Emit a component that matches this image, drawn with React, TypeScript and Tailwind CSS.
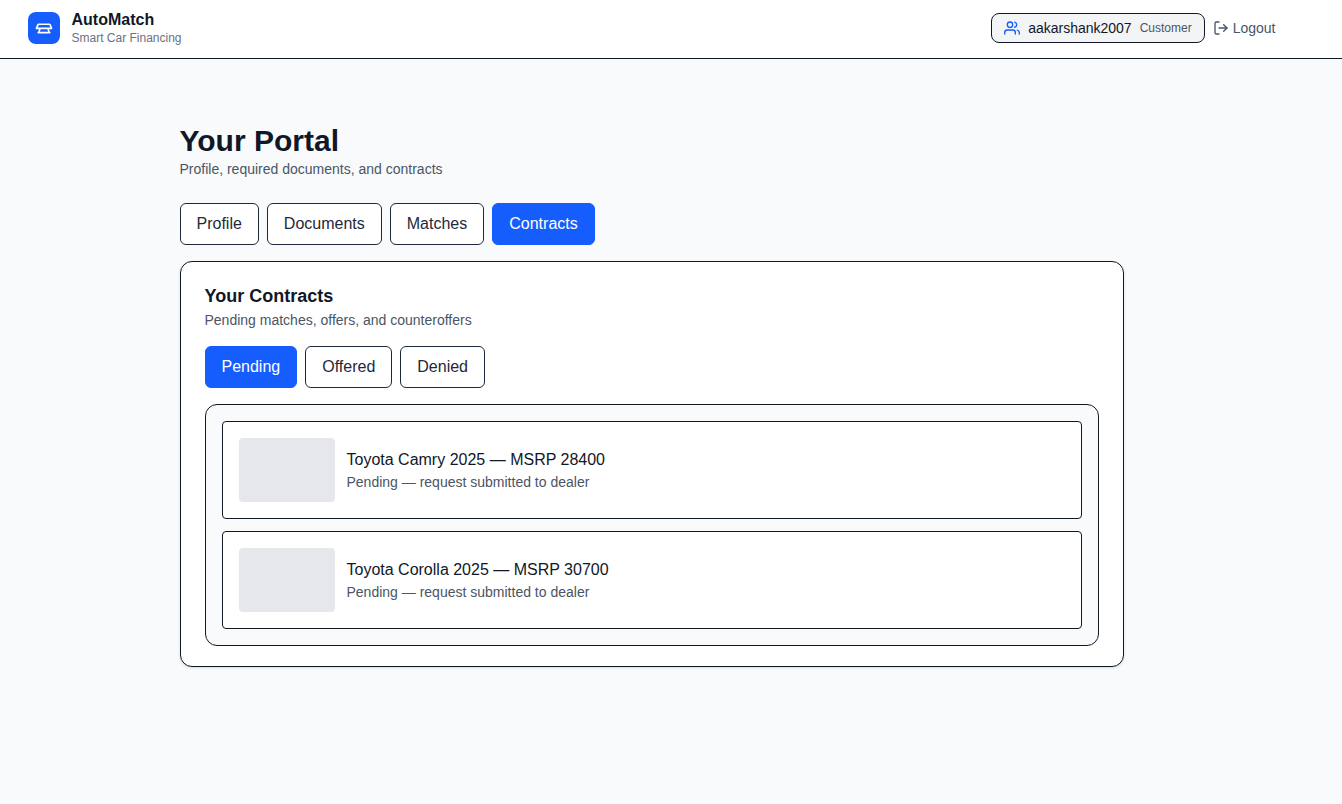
import { useState } from 'react';
import { FiLogOut, FiUsers } from 'react-icons/fi';

type PortalTab = 'Profile' | 'Documents' | 'Matches' | 'Contracts';
type ContractStatus = 'Pending' | 'Offered' | 'Denied';

interface Contract {
  id: number;
  title: string;
  status: ContractStatus;
  note: string;
}

const PORTAL_TABS: PortalTab[] = ['Profile', 'Documents', 'Matches', 'Contracts'];
const CONTRACT_TABS: ContractStatus[] = ['Pending', 'Offered', 'Denied'];

const CONTRACTS: Contract[] = [
  {
    id: 1,
    title: 'Toyota Camry 2025 — MSRP 28400',
    status: 'Pending',
    note: 'request submitted to dealer',
  },
  {
    id: 2,
    title: 'Toyota Corolla 2025 — MSRP 30700',
    status: 'Pending',
    note: 'request submitted to dealer',
  },
];

interface TabBarProps<T extends string> {
  label: string;
  tabs: T[];
  active: T;
  onSelect: (tab: T) => void;
}

function TabBar<T extends string>({ label, tabs, active, onSelect }: TabBarProps<T>) {
  return (
    <nav aria-label={label} className="flex flex-wrap gap-2">
      {tabs.map((tab) => (
        <button
          key={tab}
          type="button"
          aria-pressed={tab === active}
          onClick={() => onSelect(tab)}
          className={
            tab === active
              ? 'rounded-md border border-blue-600 bg-blue-600 px-4 py-2 text-white'
              : 'rounded-md border border-gray-800 bg-white px-4 py-2 text-gray-800'
          }
        >
          {tab}
        </button>
      ))}
    </nav>
  );
}

function CarLogo() {
  return (
    <div className="flex size-8 items-center justify-center rounded-lg bg-blue-600">
      <svg
        className="size-5 text-white"
        fill="none"
        viewBox="0 0 24 24"
        stroke="currentColor"
        strokeWidth={2}
        strokeLinecap="round"
        strokeLinejoin="round"
        aria-hidden="true"
      >
        {/* Roof and hood */}
        <path d="M3 12.5l1.5-4A1.5 1.5 0 0 1 6 7.5h12a1.5 1.5 0 0 1 1.5 1l1.5 4H3z" />
        {/* Grille and bumper */}
        <path d="M7 13l-1 4M17 13l1 4M5 17.5h14" />
      </svg>
    </div>
  );
}

function Header() {
  return (
    <header className="border-b border-gray-900 bg-white pr-[39px]">
      <div className="mx-auto flex max-w-7xl items-center justify-between px-4 pt-[10px] pb-3">
        <div className="flex items-center gap-3">
          <CarLogo />
          <div>
            <div className="text-base leading-5 font-bold">AutoMatch</div>
            <div className="text-xs text-gray-500">Smart Car Financing</div>
          </div>
        </div>
        <div className="flex items-center gap-2 text-sm">
          <div className="flex items-center gap-2 rounded-lg border border-gray-900 bg-gray-100 px-3 py-1">
            <FiUsers className="size-4 text-blue-600" aria-hidden="true" />
            <span>aakarshank2007</span>
            <span className="text-xs text-gray-600">Customer</span>
          </div>
          <button type="button" className="flex items-center gap-1 text-gray-600">
            <FiLogOut className="size-4" aria-hidden="true" />
            Logout
          </button>
        </div>
      </div>
    </header>
  );
}

function ContractCard({ contract }: { contract: Contract }) {
  return (
    <li className="flex items-center gap-3 rounded border border-gray-900 bg-white p-4">
      <div className="h-16 w-24 shrink-0 rounded bg-gray-200" />
      <div>
        <div>{contract.title}</div>
        <div className="text-sm text-gray-600">
          {contract.status} — {contract.note}
        </div>
      </div>
    </li>
  );
}

export default function App() {
  const [tab, setTab] = useState<PortalTab>('Contracts');
  const [status, setStatus] = useState<ContractStatus>('Pending');
  const visible = CONTRACTS.filter((contract) => contract.status === status);

  return (
    <div className="min-h-screen bg-gray-50 font-['Liberation_Sans',Arial,sans-serif] text-gray-900">
      <Header />
      <main className="pr-[39px]">
        <div className="mx-auto max-w-5xl px-10 pt-16 pb-10">
          <h1 className="text-3xl leading-9 font-bold">Your Portal</h1>
          <p className="text-sm text-gray-600">Profile, required documents, and contracts</p>

          <div className="mt-6">
            <TabBar label="Portal sections" tabs={PORTAL_TABS} active={tab} onSelect={setTab} />
          </div>

          {tab === 'Contracts' && (
            <section className="mt-4 rounded-xl border border-gray-900 bg-white px-6 py-5 shadow-sm">
              <h2 className="text-lg font-bold">Your Contracts</h2>
              <p className="text-sm text-gray-600">Pending matches, offers, and counteroffers</p>
              <div className="mt-4">
                <TabBar
                  label="Contract status"
                  tabs={CONTRACT_TABS}
                  active={status}
                  onSelect={setStatus}
                />
              </div>
              <ul className="mt-4 flex flex-col gap-3 rounded-xl border border-gray-900 bg-gray-50 p-4">
                {visible.map((contract) => (
                  <ContractCard key={contract.id} contract={contract} />
                ))}
              </ul>
            </section>
          )}
        </div>
      </main>
    </div>
  );
}
